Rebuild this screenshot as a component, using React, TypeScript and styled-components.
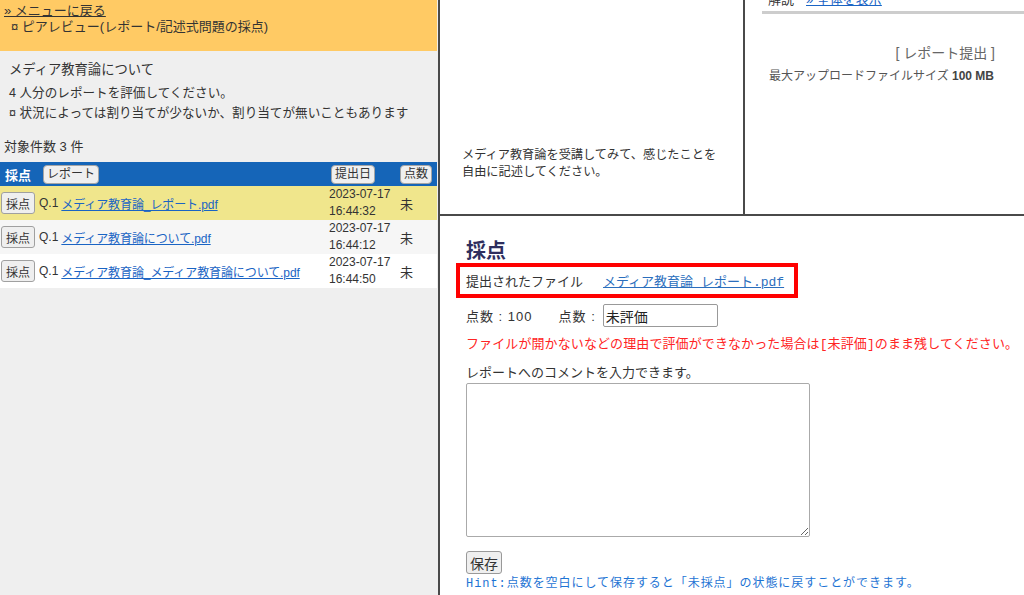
import React from "react";
import styled, { createGlobalStyle } from "styled-components";

const Global = createGlobalStyle`
  html, body { margin: 0; padding: 0; background: #fff; overflow: hidden; }
  body { font-family: "Liberation Sans", "Noto Sans CJK JP", sans-serif; color: #333; }
  * { box-sizing: border-box; }
`;

const Page = styled.div`
  display: flex;
  width: 1024px;
  height: 595px;
`;

const LeftPanel = styled.div`
  width: 440px;
  flex: none;
  background: #efefef;
  border-right: 2px solid #4a4a4a;
  padding-right: 1px;
  display: flex;
  flex-direction: column;
`;

const MenuHeader = styled.div`
  height: 51px;
  background: #ffca64;
  padding: 3px 4px 0;
  font-size: 13px;
  line-height: 16px;
`;

const BackLink = styled.a`
  color: #333;
  text-decoration: underline;
  display: block;
`;

const Crumb = styled.div`
  padding-left: 7px;
  color: #333;
`;

const Info = styled.div`
  padding: 10px 9px 0;
`;

const InfoTitle = styled.div`
  font-size: 13.3px;
  line-height: 18px;
  margin-bottom: 4px;
  color: #333;
`;

const InfoLine = styled.div`
  font-size: 12.6px;
  line-height: 20px;
  color: #333;
`;

const Count = styled.div`
  font-size: 13px;
  line-height: 18px;
  padding: 15px 4px 6px;
  color: #333;
`;

const Grid = styled.div<{ $bg?: string }>`
  display: grid;
  grid-template-columns: 1fr 71px 38px;
  align-items: center;
  background: ${(p) => p.$bg || "transparent"};
`;

const HeadRow = styled(Grid)`
  height: 24px;
  background: #1565b8;
  color: #fff;
`;

const HeadMain = styled.div`
  display: flex;
  align-items: center;
  padding-left: 5px;
  gap: 12px;
`;

const HeadLabel = styled.span`
  font-weight: bold;
  font-size: 13px;
`;

const SmallButton = styled.button`
  font-family: "Liberation Sans", "Noto Sans CJK JP", sans-serif;
  font-size: 12px;
  line-height: 14px;
  color: #333;
  background: #efefef;
  border: 1px solid #a5a5a5;
  border-radius: 4px;
  padding: 1px 3px;
  height: 19px;
`;

const HeadCell = styled.div<{ $pl: number }>`
  padding-left: ${(p) => p.$pl}px;
  display: flex;
`;

const DataRow = styled(Grid)`
  height: 34px;
`;

const RowMain = styled.div`
  display: flex;
  align-items: center;
  padding-left: 1px;
  font-size: 12px;
  white-space: nowrap;
`;

const RowButton = styled.button`
  font-family: "Liberation Sans", "Noto Sans CJK JP", sans-serif;
  font-size: 12px;
  color: #333;
  background: #efefef;
  border: 1px solid #a0a0a0;
  border-radius: 3px;
  height: 22px;
  padding: 0 4px;
  margin-right: 4px;
`;

const Q = styled.span`
  margin-right: 3px;
  color: #333;
`;

const FileLink = styled.a`
  color: #1a64c4;
  text-decoration: underline;
  letter-spacing: -0.1px;
`;

const DateCell = styled.div`
  font-size: 12px;
  line-height: 17px;
  color: #333;
  padding-left: 1px;
`;

const Score = styled.div`
  font-size: 13px;
  padding-left: 1px;
  color: #333;
`;

const RightPanel = styled.div`
  flex: 1;
  display: flex;
  flex-direction: column;
  min-width: 0;
`;

const TopArea = styled.div`
  height: 216px;
  flex: none;
  display: grid;
  grid-template-columns: 305px 1fr;
  border-bottom: 2px solid #4a4a4a;
`;

const Question = styled.div`
  border-right: 2px solid #4a4a4a;
  display: flex;
  flex-direction: column;
  justify-content: flex-end;
  padding: 0 0 33px 22px;
  font-size: 12.2px;
  line-height: 17px;
  color: #333;
  white-space: nowrap;
`;

const Side = styled.div`
  padding-left: 17px;
  display: flex;
  flex-direction: column;
`;

const CutBar = styled.div`
  height: 11px;
  overflow: hidden;
  font-size: 13px;
  line-height: 16px;
  padding-left: 6px;
  border-bottom: 3px solid #cdcdcd;
  box-sizing: content-box;
`;

const CutInner = styled.div`
  margin-top: -8px;
  display: flex;
  gap: 12px;
  color: #333;
`;

const SideLink = styled.a`
  color: #1a64c4;
  text-decoration: underline;
`;

const Submit = styled.div`
  text-align: right;
  padding-right: 29px;
  margin-top: 30px;
  font-size: 14px;
  line-height: 18px;
  color: #666;
`;

const MaxSize = styled.div`
  padding-left: 7px;
  margin-top: 6px;
  font-size: 12px;
  line-height: 16px;
  color: #555;
  b { color: #444; }
`;

const Grading = styled.div`
  padding: 24px 0 0 26px;
  font-family: "Liberation Mono", "Noto Sans CJK JP", monospace;
  font-size: 13px;
  color: #333;
`;

const Heading = styled.h2`
  margin: 0;
  font-family: "Liberation Sans", "Noto Sans CJK JP", sans-serif;
  font-size: 20px;
  line-height: 22px;
  font-weight: bold;
  color: #2e2e5e;
`;

const FileBox = styled.div`
  display: inline-flex;
  align-items: center;
  height: 35px;
  margin: 1px 0 0 -10px;
  border: 4px solid #ff0000;
  padding: 0 10px 0 6px;
`;

const BoxLink = styled.a`
  margin-left: 20px;
  color: #2a6ebd;
  text-decoration: underline;
`;

const ScoreRow = styled.div`
  display: flex;
  align-items: center;
  margin-top: 6px;
  height: 23px;
  font-family: "Liberation Sans", "Noto Sans CJK JP", sans-serif;
  letter-spacing: 1px;
`;

const ScoreLabel = styled.span<{ $ml?: number }>`
  margin-left: ${(p) => p.$ml || 0}px;
  margin-right: 5px;
`;

const ScoreInput = styled.input`
  width: 115px;
  height: 23px;
  margin-left: 2px;
  border: 1px solid #999;
  border-radius: 2px;
  font-family: "Liberation Sans", "Noto Sans CJK JP", sans-serif;
  font-size: 14px;
  letter-spacing: 0;
  padding: 0 2px;
  color: #222;
`;

const Warning = styled.div`
  margin-top: 9px;
  line-height: 18px;
  color: #ff2424;
  white-space: nowrap;
  letter-spacing: 0.1px;
`;

const CommentLabel = styled.div`
  margin-top: 11px;
  line-height: 18px;
`;

const Comment = styled.textarea`
  display: block;
  width: 344px;
  height: 154px;
  border: 1px solid #aaa;
  border-radius: 2px;
  resize: both;
`;

const SaveButton = styled.button`
  display: block;
  margin-top: 14px;
  height: 23px;
  width: 36px;
  padding: 0;
  font-family: "Liberation Sans", "Noto Sans CJK JP", sans-serif;
  font-size: 14px;
  color: #333;
  background: #efefef;
  border: 1px solid #999;
  border-radius: 3px;
`;

const Hint = styled.div`
  margin-top: 2px;
  line-height: 17px;
  font-size: 12px;
  color: #1e74d4;
  letter-spacing: 0.95px;
  white-space: nowrap;
`;

const rows = [
  { file: "メディア教育論_レポート.pdf", d: "2023-07-17", t: "16:44:32", bg: "#f0e68c" },
  { file: "メディア教育論について.pdf", d: "2023-07-17", t: "16:44:12", bg: "#f6f6f6" },
  { file: "メディア教育論_メディア教育論について.pdf", d: "2023-07-17", t: "16:44:50", bg: "#ffffff" },
];

export default function App() {
  return (
    <>
      <Global />
      <Page>
        <LeftPanel>
          <MenuHeader>
            <BackLink href="#">» メニューに戻る</BackLink>
            <Crumb>¤ ピアレビュー(レポート/記述式問題の採点)</Crumb>
          </MenuHeader>
          <Info>
            <InfoTitle>メディア教育論について</InfoTitle>
            <InfoLine>4 人分のレポートを評価してください。</InfoLine>
            <InfoLine>¤ 状況によっては割り当てが少ないか、割り当てが無いこともあります</InfoLine>
          </Info>
          <Count>対象件数 3 件</Count>
          <HeadRow>
            <HeadMain>
              <HeadLabel>採点</HeadLabel>
              <SmallButton>レポート</SmallButton>
            </HeadMain>
            <HeadCell $pl={3}>
              <SmallButton>提出日</SmallButton>
            </HeadCell>
            <HeadCell $pl={1}>
              <SmallButton>点数</SmallButton>
            </HeadCell>
          </HeadRow>
          {rows.map((r) => (
            <DataRow key={r.t} $bg={r.bg}>
              <RowMain>
                <RowButton>採点</RowButton>
                <Q>Q.1</Q>
                <FileLink href="#">{r.file}</FileLink>
              </RowMain>
              <DateCell>
                {r.d}
                <br />
                {r.t}
              </DateCell>
              <Score>未</Score>
            </DataRow>
          ))}
        </LeftPanel>
        <RightPanel>
          <TopArea>
            <Question>
              <div>メディア教育論を受講してみて、感じたことを</div>
              <div>自由に記述してください。</div>
            </Question>
            <Side>
              <CutBar>
                <CutInner>
                  <span>解説</span>
                  <SideLink href="#">» 全体を表示</SideLink>
                </CutInner>
              </CutBar>
              <Submit>[ レポート提出 ]</Submit>
              <MaxSize>
                最大アップロードファイルサイズ <b>100 MB</b>
              </MaxSize>
            </Side>
          </TopArea>
          <Grading>
            <Heading>採点</Heading>
            <FileBox>
              <span>提出されたファイル</span>
              <BoxLink href="#">メディア教育論_レポート.pdf</BoxLink>
            </FileBox>
            <ScoreRow>
              <ScoreLabel>点数 : 100</ScoreLabel>
              <ScoreLabel $ml={21}>点数 :</ScoreLabel>
              <ScoreInput defaultValue="未評価" />
            </ScoreRow>
            <Warning>ファイルが開かないなどの理由で評価ができなかった場合は[未評価]のまま残してください。</Warning>
            <CommentLabel>レポートへのコメントを入力できます。</CommentLabel>
            <Comment />
            <SaveButton>保存</SaveButton>
            <Hint>Hint:点数を空白にして保存すると「未採点」の状態に戻すことができます。</Hint>
          </Grading>
        </RightPanel>
      </Page>
    </>
  );
}
